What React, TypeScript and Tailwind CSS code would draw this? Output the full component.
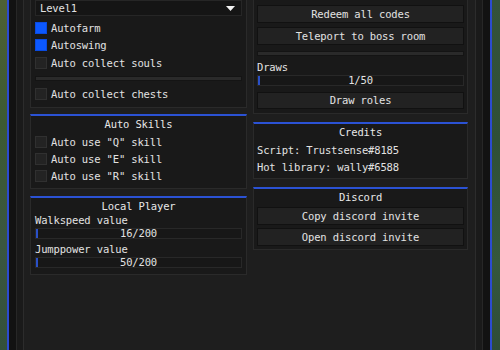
import React from 'react';

const mono = { fontFamily: '"DejaVu Sans Mono", "Liberation Mono", monospace' };

function Check({ on, label, className = '' }: { on?: boolean; label: string; className?: string }) {
  return (
    <div className={`flex h-[12px] items-center gap-[4px] ${className}`}>
      <div
        className={
          on
            ? 'h-[12px] w-[12px] shrink-0 border border-[#0a4be0] bg-[#0c58ff]'
            : 'h-[12px] w-[12px] shrink-0 border border-[#303030] bg-[#232323]'
        }
      />
      <span className="leading-none">{label}</span>
    </div>
  );
}

function Button({ label, className = '', h = 'h-[18px]' }: { label: string; className?: string; h?: string }) {
  return (
    <div className={`flex ${h} items-center justify-center border border-[#111111] bg-[#222222] leading-none ${className}`}>
      {label}
    </div>
  );
}

function Slider({ value, className = '' }: { value: string; className?: string }) {
  return (
    <div className={`relative flex h-[11px] items-center justify-center border border-[#282828] bg-[#171717] leading-none ${className}`}>
      <div className="absolute left-0 top-0 h-full w-[2px] bg-[#2a50c8]" />
      <span>{value}</span>
    </div>
  );
}

function Separator({ className = '' }: { className?: string }) {
  return <div className={`h-[5px] border border-[#141414] bg-[#2a2a2a] ${className}`} />;
}

function Title({ text }: { text: string }) {
  return <div className="flex h-[16px] items-center justify-center leading-none text-[#e8e8e8]">{text}</div>;
}

export default function App() {
  return (
    <div
      className="flex h-[350px] w-[500px] overflow-hidden text-[10.5px] tracking-[-0.15px] text-[#e2e2e2]"
      style={mono}
    >
      <div className="h-full w-[7px] shrink-0 bg-[linear-gradient(180deg,#4e6034_0%,#3c5a33_35%,#3a5640_70%,#33503b_100%)]" />
      <div className="flex h-full w-[485px] shrink-0 border-x-2 border-[#2c4bd0] bg-[#121212] px-[7px]">
        <div className="flex h-full w-[467px] shrink-0 border-x border-[#272727] bg-[#1a1a1a] px-[6px]">
          <div className="flex h-full w-[453px] shrink-0 gap-[6px] border-x border-[#2c2c2c] bg-[#1e1e1e] pl-[6px] pr-[7px]">
            {/* left column */}
            <div className="flex w-[217px] shrink-0 flex-col">
              <div className="border border-t-0 border-[#2a2a2a] bg-[#191919] px-[4px] pb-[7px]">
                <div className="flex h-[16px] items-center justify-between border border-[#262626] bg-[#151515] pl-[4px] pr-[6px]">
                  <span className="leading-none">Level1</span>
                  <svg width="9" height="5" viewBox="0 0 9 5">
                    <path d="M0 0 H9 L4.5 5 Z" fill="#f2f2f2" />
                  </svg>
                </div>
                <Check on label="Autofarm" className="mt-[6px]" />
                <Check on label="Autoswing" className="mt-[5px]" />
                <Check label="Auto collect souls" className="mt-[6px]" />
                <Separator className="mt-[7px]" />
                <Check label="Auto collect chests" className="mt-[7px]" />
              </div>

              <div className="mt-[6px] border border-t-2 border-[#2a2a2a] border-t-[#2b52d4] bg-[#191919] px-[4px] pb-[6px]">
                <Title text="Auto Skills" />
                <Check label='Auto use "Q" skill' className="mt-[4px]" />
                <Check label='Auto use "E" skill' className="mt-[5px]" />
                <Check label='Auto use "R" skill' className="mt-[5px]" />
              </div>

              <div className="mt-[7px] border border-t-2 border-[#2a2a2a] border-t-[#2b52d4] bg-[#191919] px-[4px] pb-[6px]">
                <Title text="Local Player" />
                <div className="flex h-[12px] items-center leading-none">Walkspeed value</div>
                <Slider value="16/200" className="mt-[2px]" />
                <div className="mt-[4px] flex h-[12px] items-center leading-none">Jumppower value</div>
                <Slider value="50/200" className="mt-[2px]" />
              </div>
            </div>

            {/* right column */}
            <div className="flex w-[215px] shrink-0 flex-col">
              <div className="border border-t-0 border-[#2a2a2a] bg-[#191919] px-[3px] pb-[4px] pt-[5px]">
                <Button label="Redeem all codes" />
                <Button label="Teleport to boss room" className="mt-[4px]" />
                <Separator className="mt-[6px]" />
                <div className="mt-[5px] flex h-[12px] items-center leading-none">Draws</div>
                <Slider value="1/50" className="mt-[2px]" />
                <Button label="Draw roles" h="h-[17px]" className="mt-[6px]" />
              </div>

              <div className="mt-[8px] border border-t-2 border-[#2a2a2a] border-t-[#2b52d4] bg-[#191919] px-[3px] pb-[5px]">
                <Title text="Credits" />
                <div className="mt-[4px] flex h-[12px] items-center leading-none">Script: Trustsense#8185</div>
                <div className="mt-[5px] flex h-[12px] items-center leading-none">Hot library: wally#6588</div>
              </div>

              <div className="mt-[8px] border border-t-2 border-[#2a2a2a] border-t-[#2b52d4] bg-[#191919] px-[3px] pb-[3px]">
                <Title text="Discord" />
                <Button label="Copy discord invite" className="mt-[2px]" />
                <Button label="Open discord invite" className="mt-[3px]" />
              </div>
            </div>
          </div>
        </div>
      </div>
      <div className="h-full min-w-[8px] flex-1 bg-[linear-gradient(180deg,#34523a_0%,#2f4f36_40%,#35573c_75%,#2e4c38_100%)]" />
    </div>
  );
}
